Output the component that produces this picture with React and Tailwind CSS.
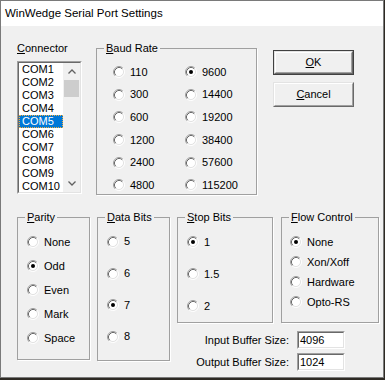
import React from "react";

// classic 3D radio button
const Radio = ({ checked }) => (
  <svg width="12" height="12" viewBox="0 0 12 12" className="shrink-0">
    <circle cx="6" cy="6" r="4.5" fill="#fff" />
    <path d="M2.11 9.89 A5.5 5.5 0 0 1 9.89 2.11" fill="none" stroke="#a0a0a0" />
    <path d="M9.89 2.11 A5.5 5.5 0 0 1 2.11 9.89" fill="none" stroke="#fff" />
    <path d="M2.82 9.18 A4.5 4.5 0 0 1 9.18 2.82" fill="none" stroke="#696969" />
    <path d="M9.18 2.82 A4.5 4.5 0 0 1 2.82 9.18" fill="none" stroke="#e3e3e3" />
    {checked && <circle cx="6" cy="6" r="2" fill="#000" />}
  </svg>
);

const Option = ({ label, checked, rowClass }) => (
  <div className={`flex items-center gap-[5px] ${rowClass}`}>
    <Radio checked={checked} />
    <span className="leading-[13px]">{label}</span>
  </div>
);

const Group = ({ title, underline, className, children }) => (
  <fieldset
    className={`border border-[#a0a0a0] shadow-[1px_1px_0_#fff] ${className}`}
  >
    <legend className="ml-[7px] px-[2px] leading-[13px]">
      <u>{underline}</u>
      {title}
    </legend>
    {children}
  </fieldset>
);

const Sunken = ({ className, children }) => (
  <div
    className={`border border-t-[#a0a0a0] border-l-[#a0a0a0] border-r-white border-b-white ${className}`}
  >
    <div className="w-full h-full border border-t-[#696969] border-l-[#696969] border-r-[#e3e3e3] border-b-[#e3e3e3] bg-white overflow-hidden">
      {children}
    </div>
  </div>
);

const Chevron = ({ down }) => (
  <svg width="8" height="5" viewBox="0 0 8 5">
    <polyline
      points={down ? "0.5,0.5 4,4 7.5,0.5" : "0.5,4.5 4,1 7.5,4.5"}
      fill="none"
      stroke="#606060"
      strokeWidth="1.3"
    />
  </svg>
);

const ports = ["COM1", "COM2", "COM3", "COM4", "COM5", "COM6", "COM7", "COM8", "COM9", "COM10"];

const baudLeft = ["110", "300", "600", "1200", "2400", "4800"];
const baudRight = ["9600", "14400", "19200", "38400", "57600", "115200"];

const Button = ({ underline, rest, isDefault }) => {
  const inner = (
    <div className="h-full border border-t-[#e3e3e3] border-l-[#e3e3e3] border-r-[#696969] border-b-[#696969]">
      <div className="h-full flex items-center justify-center border border-t-white border-l-white border-r-[#a0a0a0] border-b-[#a0a0a0] bg-[#f0f0f0]">
        <span>
          <u>{underline}</u>
          {rest}
        </span>
      </div>
    </div>
  );
  return isDefault ? (
    <div className="w-[81px] h-[25px] border border-[#404040]">{inner}</div>
  ) : (
    <div className="w-[81px] h-[25px]">{inner}</div>
  );
};

export default function App() {
  return (
    <div className="w-[385px] h-[380px] bg-[#2e2a24] font-['Liberation_Sans',Arial,sans-serif] text-[11px] text-black">
      <div className="w-[384px] h-[378px] bg-[#f0f0f0] border border-[#7a7a7a] flex flex-col">
        {/* title bar */}
        <div className="h-[25px] bg-white flex items-center pl-[4px] text-[11.5px] text-black">
          WinWedge Serial Port Settings
        </div>

        {/* top row */}
        <div className="flex pt-[15px] pl-[16px]">
          <div className="w-[65px] flex flex-col">
            <div className="leading-[14px]">
              <u>C</u>onnector
            </div>
            <Sunken className="mt-[6px] w-[65px] h-[133px]">
              <div className="flex h-full">
                <div className="flex-1 flex flex-col">
                  {ports.map((p) => (
                    <div
                      key={p}
                      className={`h-[13px] shrink-0 leading-[11px] pl-[2px] ${
                        p === "COM5"
                          ? "bg-[#0078d7] text-white border border-dotted border-[#f5b040]"
                          : "border border-transparent"
                      }`}
                    >
                      {p}
                    </div>
                  ))}
                </div>
                <div className="w-[17px] bg-[#f0f0f0] flex flex-col items-center">
                  <div className="h-[17px] flex items-center justify-center">
                    <Chevron />
                  </div>
                  <div className="w-[15px] h-[17px] bg-[#cdcdcd]" />
                  <div className="flex-1" />
                  <div className="h-[17px] flex items-center justify-center">
                    <Chevron down />
                  </div>
                </div>
              </div>
            </Sunken>
          </div>

          <Group
            title="aud Rate"
            underline="B"
            className="ml-[14px] mt-[1px] w-[161px] h-[153px]"
          >
            <div className="flex pt-[6px] pl-[16px]">
              <div className="w-[72px] flex flex-col">
                {baudLeft.map((b) => (
                  <Option key={b} label={b} rowClass="h-[22.6px]" />
                ))}
              </div>
              <div className="flex flex-col">
                {baudRight.map((b) => (
                  <Option
                    key={b}
                    label={b}
                    checked={b === "9600"}
                    rowClass="h-[22.6px]"
                  />
                ))}
              </div>
            </div>
          </Group>

          <div className="ml-[16px] mt-[9px] flex flex-col gap-[7px]">
            <Button underline="O" rest="K" isDefault />
            <Button underline="C" rest="ancel" />
          </div>
        </div>

        {/* bottom row */}
        <div className="flex pl-[16px] mt-[16px] gap-[7px]">
          <Group title="arity" underline="P" className="w-[73px] h-[149px]">
            <div className="flex flex-col pt-[6px] pl-[9px]">
              {["None", "Odd", "Even", "Mark", "Space"].map((o) => (
                <Option key={o} label={o} checked={o === "Odd"} rowClass="h-[24px]" />
              ))}
            </div>
          </Group>

          <Group title="ata Bits" underline="D" className="w-[73px] h-[150px]">
            <div className="flex flex-col pt-[2px] pl-[9px]">
              {["5", "6", "7", "8"].map((o) => (
                <Option key={o} label={o} checked={o === "7"} rowClass="h-[31.7px]" />
              ))}
            </div>
          </Group>

          <div className="flex flex-col">
            <div className="flex gap-[8px]">
              <Group title="top Bits" underline="S" className="w-[96px] h-[112px]">
                <div className="flex flex-col pt-[2px] pl-[9px]">
                  {["1", "1.5", "2"].map((o) => (
                    <Option key={o} label={o} checked={o === "1"} rowClass="h-[32px]" />
                  ))}
                </div>
              </Group>
              <Group title="low Control" underline="F" className="w-[98px] h-[112px]">
                <div className="flex flex-col pt-[8px] pl-[8px]">
                  {["None", "Xon/Xoff", "Hardware", "Opto-RS"].map((o) => (
                    <Option key={o} label={o} checked={o === "None"} rowClass="h-[20px]" />
                  ))}
                </div>
              </Group>
            </div>

            <div className="flex items-center justify-end gap-[8px] pr-[34px] mt-[8px]">
              <span>Input Buffer Size:</span>
              <Sunken className="w-[48px] h-[18px]">
                <div className="leading-[14px] pl-[1px]">4096</div>
              </Sunken>
            </div>
            <div className="flex items-center justify-end gap-[8px] pr-[34px] mt-[4px]">
              <span>Output Buffer Size:</span>
              <Sunken className="w-[48px] h-[18px]">
                <div className="leading-[14px] pl-[1px]">1024</div>
              </Sunken>
            </div>
          </div>
        </div>
      </div>
    </div>
  );
}
